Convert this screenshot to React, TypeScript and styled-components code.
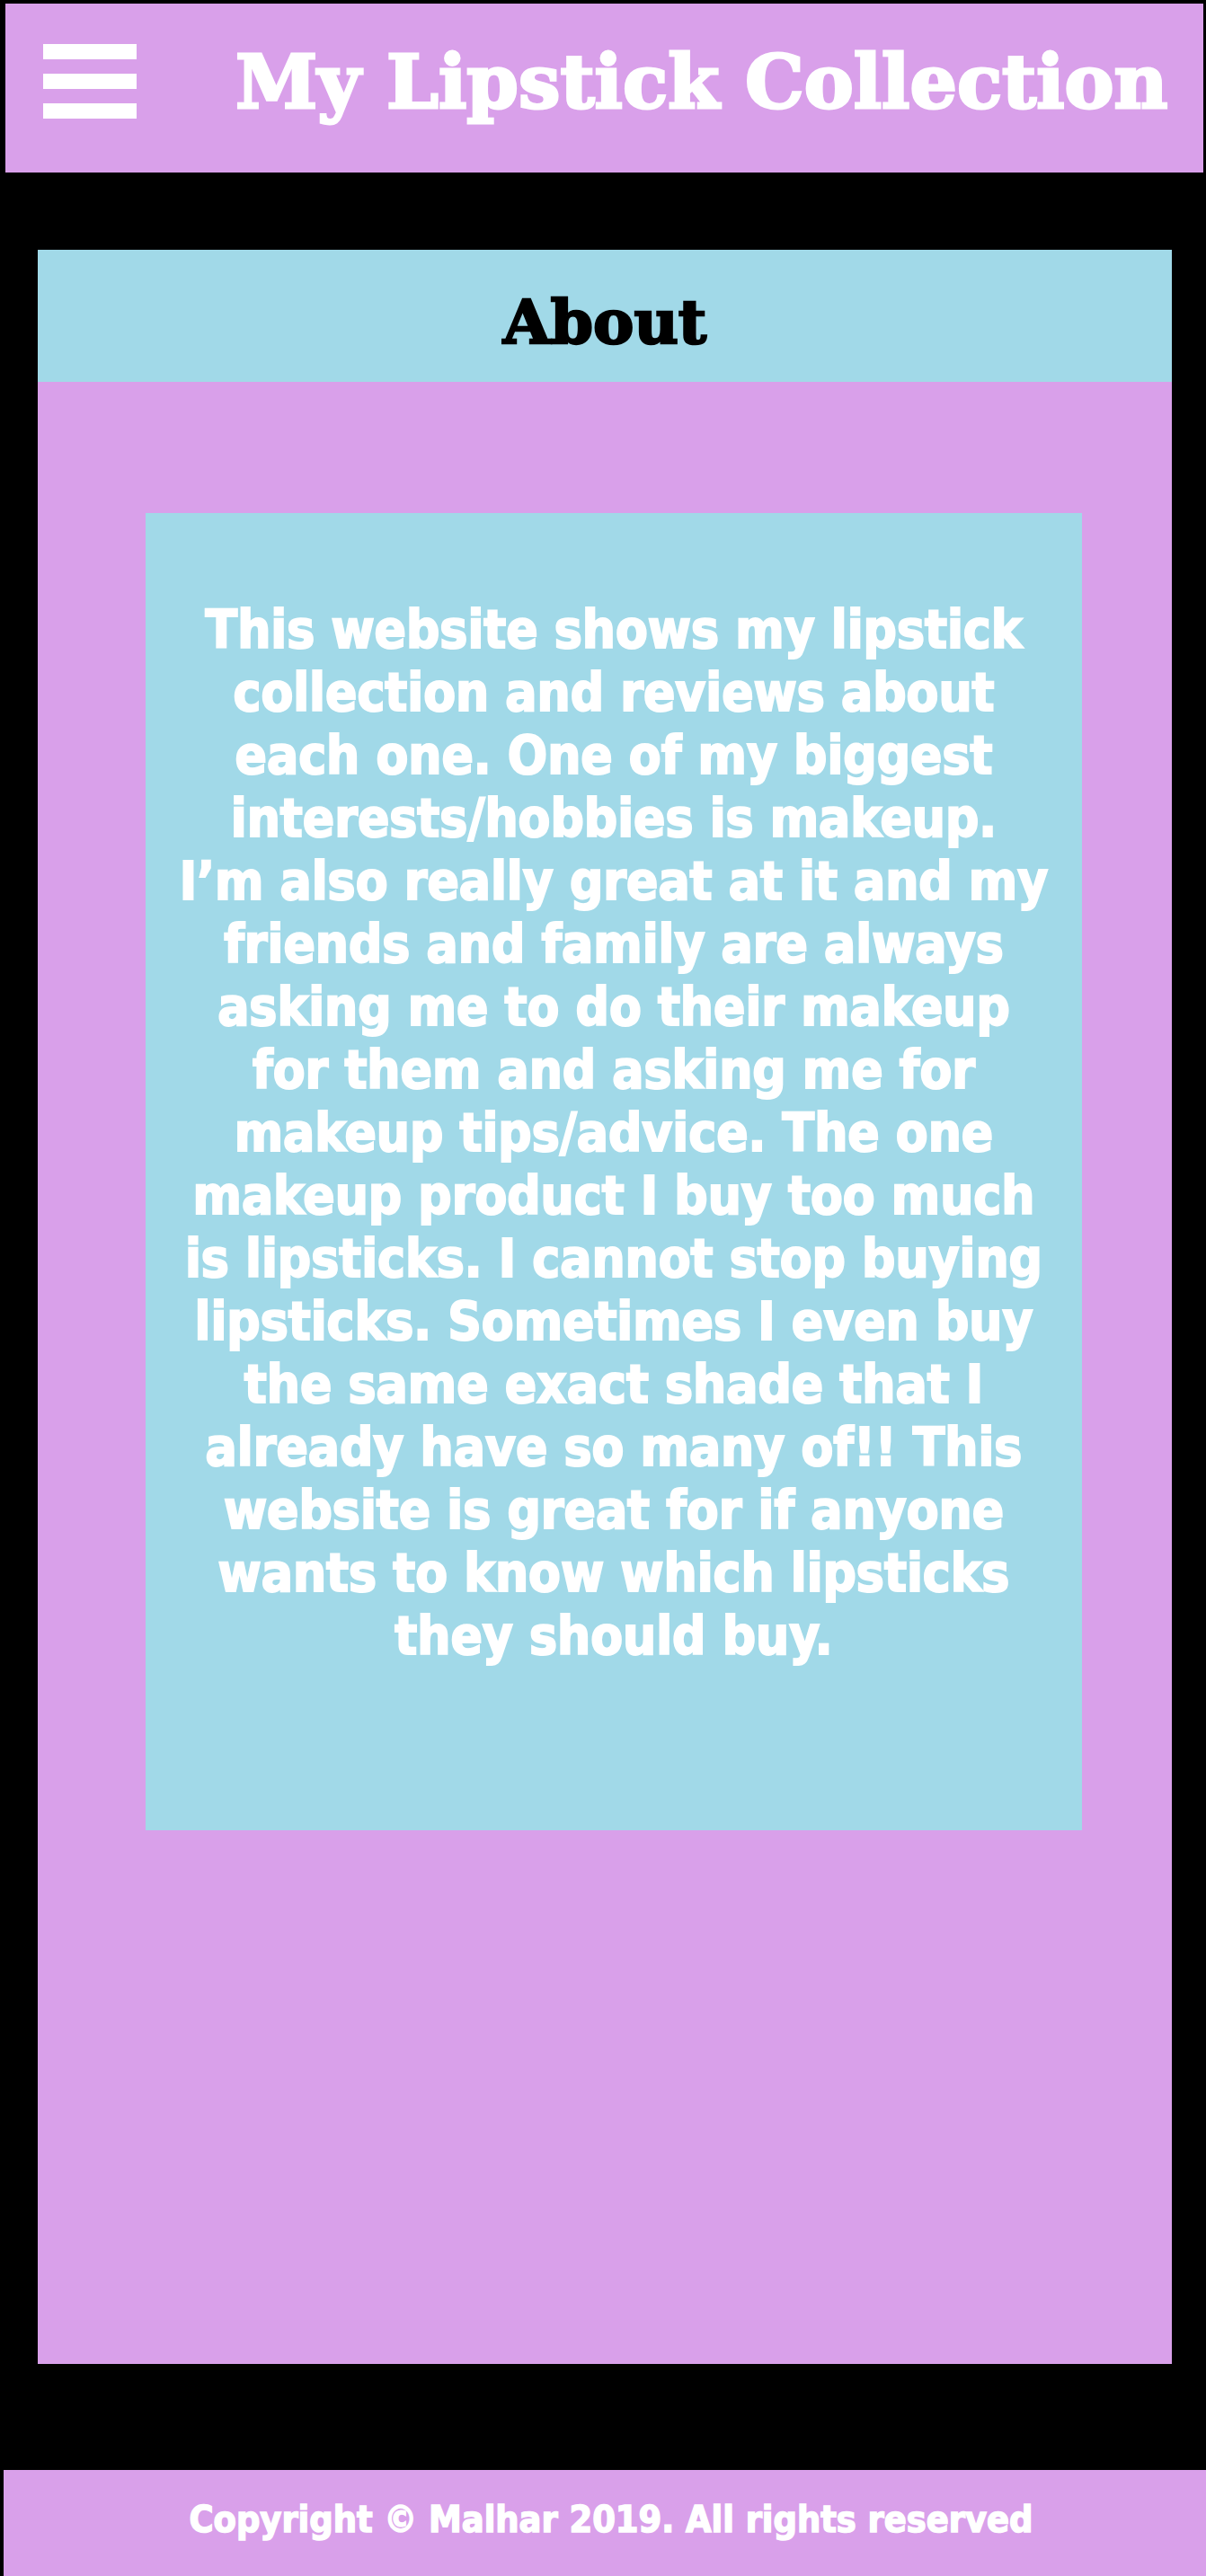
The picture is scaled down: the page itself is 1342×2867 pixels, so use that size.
import React from "react";
import styled, { createGlobalStyle } from "styled-components";

const GlobalStyle = createGlobalStyle`
  html, body {
    margin: 0;
    padding: 0;
    background: #000000;
  }
  #root {
    min-height: 2867px;
  }
`;

const PURPLE = "#d9a0ea";
const BLUE = "#a1d9e8";

const Page = styled.div`
  display: flex;
  flex-direction: column;
  min-height: 2867px;
  background: #000000;
`;

const Header = styled.header`
  display: flex;
  align-items: flex-start;
  margin: 4px 3px 0 6px;
  height: 188px;
  background: ${PURPLE};
`;

const Burger = styled.button`
  display: flex;
  flex-direction: column;
  gap: 16px;
  margin: 45px 0 0 42px;
  padding: 0;
  border: none;
  background: transparent;
  cursor: pointer;
`;

const BurgerBar = styled.span`
  display: block;
  width: 104px;
  height: 17px;
  background: #ffffff;
`;

const SiteTitle = styled.h1`
  margin: 47px 0 0 110px;
  font-family: "DejaVu Serif", serif;
  font-weight: bold;
  font-size: 82.5px;
  line-height: 80px;
  color: #ffffff;
  -webkit-text-stroke: 3px #ffffff;
  white-space: nowrap;
`;

const Main = styled.main`
  display: flex;
  flex: 1;
  padding: 86px 0 118px 42px;
`;

const Panel = styled.section`
  display: flex;
  flex-direction: column;
  width: 1262px;
`;

const PanelHead = styled.div`
  display: flex;
  align-items: center;
  justify-content: center;
  height: 147px;
  box-sizing: border-box;
  padding-top: 12px;
  background: ${BLUE};
`;

const PanelTitle = styled.h2`
  margin: 0;
  font-family: "DejaVu Serif", serif;
  font-weight: bold;
  font-size: 68px;
  line-height: 1;
  color: #000000;
  -webkit-text-stroke: 2.5px #000000;
`;

const PanelBody = styled.div`
  height: 2206px;
  padding: 146px 0 0 120px;
  box-sizing: border-box;
  background: ${PURPLE};
`;

const AboutBox = styled.div`
  width: 1042px;
  height: 1466px;
  box-sizing: border-box;
  padding: 95px 10px 0;
  background: ${BLUE};
`;

const AboutText = styled.p`
  margin: 0;
  font-family: "DejaVu Sans", Verdana, sans-serif;
  font-weight: bold;
  font-stretch: condensed;
  font-size: 58px;
  line-height: 70px;
  color: #ffffff;
  -webkit-text-stroke: 2px #ffffff;
  text-align: center;
  white-space: nowrap;
`;

const Footer = styled.footer`
  display: flex;
  align-items: center;
  justify-content: center;
  height: 118px;
  box-sizing: border-box;
  padding: 0 0 8px 14px;
  margin-left: 4px;
  background: ${PURPLE};
`;

const FooterText = styled.p`
  margin: 0;
  font-family: "DejaVu Sans", Verdana, sans-serif;
  font-weight: bold;
  font-stretch: condensed;
  font-size: 41px;
  color: #ffffff;
  -webkit-text-stroke: 1.5px #ffffff;
  white-space: nowrap;
`;

const lines = [
  "This website shows my lipstick",
  "collection and reviews about",
  "each one. One of my biggest",
  "interests/hobbies is makeup.",
  "I\u2019m also really great at it and my",
  "friends and family are always",
  "asking me to do their makeup",
  "for them and asking me for",
  "makeup tips/advice. The one",
  "makeup product I buy too much",
  "is lipsticks. I cannot stop buying",
  "lipsticks. Sometimes I even buy",
  "the same exact shade that I",
  "already have so many of!! This",
  "website is great for if anyone",
  "wants to know which lipsticks",
  "they should buy.",
];

export default function App() {
  return (
    <>
      <GlobalStyle />
      <Page>
        <Header>
          <Burger aria-label="Menu">
            <BurgerBar />
            <BurgerBar />
            <BurgerBar />
          </Burger>
          <SiteTitle>My Lipstick Collection</SiteTitle>
        </Header>
        <Main>
          <Panel>
            <PanelHead>
              <PanelTitle>About</PanelTitle>
            </PanelHead>
            <PanelBody>
              <AboutBox>
                <AboutText>
                  {lines.map((l, i) => (
                    <React.Fragment key={i}>
                      {l}
                      {i < lines.length - 1 && <br />}
                    </React.Fragment>
                  ))}
                </AboutText>
              </AboutBox>
            </PanelBody>
          </Panel>
        </Main>
        <Footer>
          <FooterText>Copyright © Malhar 2019. All rights reserved</FooterText>
        </Footer>
      </Page>
    </>
  );
}
